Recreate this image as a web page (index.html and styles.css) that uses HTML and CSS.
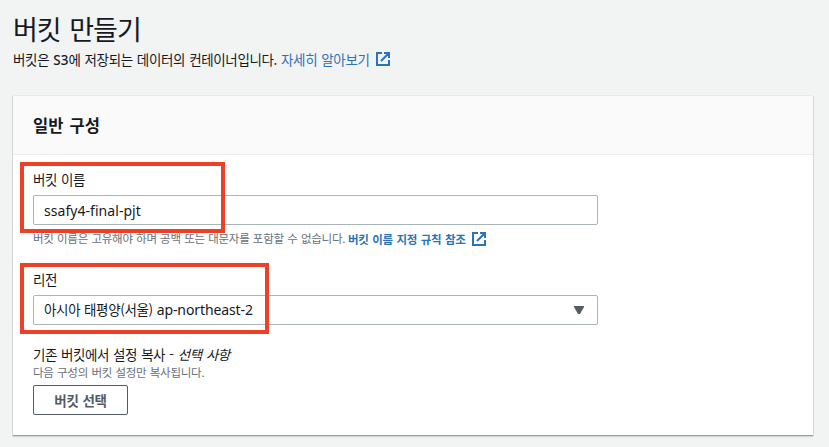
FILE: index.html
```html
<!DOCTYPE html>
<html lang="ko">
<head>
<meta charset="utf-8">
<title>버킷 만들기</title>
<link rel="stylesheet" href="styles.css">
</head>
<body>
<main class="page">
  <header class="page-header">
    <h1 class="title"><span>버킷 만들기</span></h1>
    <p class="description"><span class="description-text">버킷은 <span class="latin medium">S3</span>에 저장되는 데이터의 컨테이너입니다.</span><a class="link"><span>자세히 알아보기</span><svg class="external" viewBox="0 0 14 14"><path d="M6 1H1v12h12V8M8 1h5v5M13 1L5 9"/></svg></a></p>
  </header>
  <section class="card">
    <div class="card-header"><h2 class="card-title">일반 구성</h2></div>
    <div class="card-body">
      <div class="field name-field">
        <label class="label">버킷 이름</label>
        <div class="control"><span class="value-name">ssafy4-final-pjt</span></div>
        <p class="hint"><span class="hint-text">버킷 이름은 고유해야 하며 공백 또는 대문자를 포함할 수 없습니다.</span><a class="link strong"><span>버킷 이름 지정 규칙 참조</span><svg class="external" viewBox="0 0 14 14"><path d="M6 1H1v12h12V8M8 1h5v5M13 1L5 9"/></svg></a></p>
        <div class="highlight highlight-name"></div>
      </div>
      <div class="field region-field">
        <label class="label">리전</label>
        <div class="control"><span class="value-region">아시아 태평양(서울) <span class="latin">ap-northeast-2</span></span><svg class="caret" viewBox="0 0 10 8"><path d="M0 0h10v1L6 8H4L0 1z"/></svg></div>
        <div class="highlight highlight-region"></div>
      </div>
      <div class="field copy-field">
        <div class="label copy-label">기존 버킷에서 설정 복사 - <em>선택 사항</em></div>
        <p class="copy-hint">다음 구성의 버킷 설정만 복사됩니다.</p>
        <button class="button">버킷 선택</button>
      </div>
    </div>
  </section>
</main>
</body>
</html>
```
FILE: styles.css
```css
* { box-sizing: border-box; }
body {
  margin: 0;
  min-height: 447px;
  background: #f2f3f3;
  color: #16191f;
  font-family: "Noto Sans CJK KR", sans-serif;
  font-size: 13.5px;
}
h1, h2, p { margin: 0; font-weight: 400; }
.page { padding: 9px 16px 11px 13px; white-space: nowrap; }
.page-header { height: 87px; }
.title { height: 39px; font-size: 27px; line-height: 39px; letter-spacing: -1px; word-spacing: 2px; }
.description { display: flex; height: 22px; line-height: 22px; letter-spacing: -0.35px; word-spacing: 0.6px; }
.description-text { width: 268px; }
.latin, .value-name { font-family: "Noto Sans", "Noto Sans CJK KR", sans-serif; }
.medium { font-weight: 500; letter-spacing: 0; }
.link { display: flex; align-items: center; gap: 6px; color: #2a74b8; }
.external { width: 14px; height: 14px; fill: none; stroke: #2a74b8; stroke-width: 2; }
.card {
  height: 340px;
  background: #fff;
  border-bottom: 1px solid #97a2a6;
  box-shadow: 0 1px 1px #d0d6d7, 1px 0 0 #d2d7d8, -1px 0 0 #d2d7d8, 0 -1px 0 #e8eaea;
}
.card-header { height: 59px; padding: 16px 20px; background: #fafafa; border-bottom: 1px solid #eaeded; }
.card-title { font-size: 16.500px; font-weight: 700; line-height: 27px; letter-spacing: 0; word-spacing: 1.5px; }
.card-body { padding: 14px 20px 0; }
.field { position: relative; }
.name-field { height: 100px; }
.region-field { height: 75px; }
.label { display: block; height: 26px; line-height: 21px; letter-spacing: -0.5px; word-spacing: 1px; }
.control {
  display: flex;
  align-items: center;
  justify-content: space-between;
  width: 565px;
  height: 30px;
  padding: 0 13px 0 10px;
  border: 1px solid #aab7b8;
  border-radius: 2px;
}
.value-name { font-size: 14px; letter-spacing: 0.05px; }
.value-region { padding-bottom: 2px; letter-spacing: -0.35px; word-spacing: 0.4px; }
.value-region .latin { font-size: 14px; letter-spacing: -0.1px; }
.caret { width: 10px; height: 8px; fill: #545b64; }
.hint { display: flex; height: 18px; margin-top: 5px; color: #687078; font-size: 11.5px; line-height: 17px; letter-spacing: -0.25px; word-spacing: 0.4px; }
.hint-text { width: 315px; }
.strong { font-weight: 700; letter-spacing: -0.25px; word-spacing: 0.6px; }
.highlight { position: absolute; left: -13px; border: 4px solid #ee4026; }
.highlight-name { top: -7px; width: 205px; height: 71px; }
.highlight-region { top: -6px; width: 249px; height: 71px; }
.copy-label { height: 20px; line-height: 20px; letter-spacing: -0.5px; }
.copy-hint { height: 21px; color: #687078; font-size: 11.5px; line-height: 17px; letter-spacing: -0.25px; word-spacing: 0.4px; }
.button {
  display: block;
  width: 95px;
  height: 30px;
  padding: 0;
  border: 1px solid #545b64;
  border-radius: 2px;
  background: #fff;
  color: #545b64;
  font: 700 13.5px/26px "Noto Sans CJK KR", sans-serif;
  letter-spacing: -0.3px;
  word-spacing: 0.5px;
}
```
